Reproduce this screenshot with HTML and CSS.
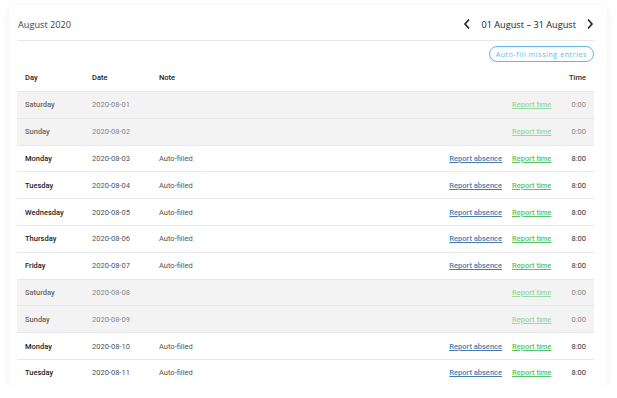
FILE: index.html
```html
<!DOCTYPE html>
<html lang="en">
<head>
  <meta charset="UTF-8" />
  <meta name="viewport" content="width=device-width, initial-scale=1.0"/>
  <title>Timesheet</title>
  <link rel="stylesheet" href="styles.css">
</head>
<body>

<div class="card">
  <div class="card-header">
    <h1 class="title">August 2020</h1>
    <div class="range">
      <button class="range-nav" aria-label="Previous">
        <svg width="8" height="12" viewBox="0 0 8 12"><polyline points="6,1.5 2,6 6,10.5" fill="none" stroke="#222" stroke-width="1.6"/></svg>
      </button>
      <span class="range-label">01 August – 31 August</span>
      <button class="range-nav" aria-label="Next">
        <svg width="8" height="12" viewBox="0 0 8 12"><polyline points="2,1.5 6,6 2,10.5" fill="none" stroke="#222" stroke-width="1.6"/></svg>
      </button>
    </div>
  </div>

  <div class="toolbar">
    <button class="autofill">Auto-fill missing entries</button>
  </div>

  <table class="sheet">
    <colgroup>
      <col class="c-day"><col class="c-date"><col><col class="c-absence"><col class="c-report"><col class="c-time">
    </colgroup>
    <thead>
      <tr>
        <th>Day</th>
        <th>Date</th>
        <th>Note</th>
        <th></th>
        <th></th>
        <th class="num">Time</th>
      </tr>
    </thead>
    <tbody>
      <tr class="weekend"><td class="day">Saturday</td><td class="date">2020-08-01</td><td></td><td></td><td><a href="#" class="report">Report time</a></td><td class="num">0:00</td></tr>
      <tr class="weekend"><td class="day">Sunday</td><td class="date">2020-08-02</td><td></td><td></td><td><a href="#" class="report">Report time</a></td><td class="num">0:00</td></tr>
      <tr><td class="day">Monday</td><td class="date">2020-08-03</td><td class="note">Auto-filled</td><td class="abs"><a href="#" class="absence">Report absence</a></td><td><a href="#" class="report">Report time</a></td><td class="num">8:00</td></tr>
      <tr><td class="day">Tuesday</td><td class="date">2020-08-04</td><td class="note">Auto-filled</td><td class="abs"><a href="#" class="absence">Report absence</a></td><td><a href="#" class="report">Report time</a></td><td class="num">8:00</td></tr>
      <tr><td class="day">Wednesday</td><td class="date">2020-08-05</td><td class="note">Auto-filled</td><td class="abs"><a href="#" class="absence">Report absence</a></td><td><a href="#" class="report">Report time</a></td><td class="num">8:00</td></tr>
      <tr><td class="day">Thursday</td><td class="date">2020-08-06</td><td class="note">Auto-filled</td><td class="abs"><a href="#" class="absence">Report absence</a></td><td><a href="#" class="report">Report time</a></td><td class="num">8:00</td></tr>
      <tr><td class="day">Friday</td><td class="date">2020-08-07</td><td class="note">Auto-filled</td><td class="abs"><a href="#" class="absence">Report absence</a></td><td><a href="#" class="report">Report time</a></td><td class="num">8:00</td></tr>
      <tr class="weekend"><td class="day">Saturday</td><td class="date">2020-08-08</td><td></td><td></td><td><a href="#" class="report">Report time</a></td><td class="num">0:00</td></tr>
      <tr class="weekend"><td class="day">Sunday</td><td class="date">2020-08-09</td><td></td><td></td><td><a href="#" class="report">Report time</a></td><td class="num">0:00</td></tr>
      <tr><td class="day">Monday</td><td class="date">2020-08-10</td><td class="note">Auto-filled</td><td class="abs"><a href="#" class="absence">Report absence</a></td><td><a href="#" class="report">Report time</a></td><td class="num">8:00</td></tr>
      <tr><td class="day">Tuesday</td><td class="date">2020-08-11</td><td class="note">Auto-filled</td><td class="abs"><a href="#" class="absence">Report absence</a></td><td><a href="#" class="report">Report time</a></td><td class="num">8:00</td></tr>
    </tbody>
  </table>
</div>

</body>
</html>
```

FILE: styles.css
```css
/* --- base --- */
:root {
  --line: #e8e8e8;
  --weekend-bg: #f3f3f3;
  --text: #222;
  --blue: #3f7fb3;
  --green: #5cc45c;
  --sky: #62b8dc;
}
* {
  box-sizing: border-box;
  margin: 0;
  padding: 0;
}

body {
  font-family: Roboto, "Open Sans", sans-serif;
  background: #fff;
  color: var(--text);
  padding: 5px 10px 0 9px;
}

.card {
  width: 598px;
  height: 380px;
  background: #fff;
  border-radius: 6px;
  box-shadow: 0 2px 10px rgba(0,0,0,0.07);
  padding: 8px 13px 0 8px;
  overflow: hidden;
}

.card-header {
  display: flex;
  justify-content: space-between;
  align-items: center;
  height: 28px;
  padding: 0 0 5px 1px;
  border-bottom: 1px solid var(--line);
}

.title {
  font-family: "Open Sans", sans-serif;
  font-size: 9.2px;
  font-weight: 400;
  color: #444;
}

.range {
  display: flex;
  align-items: center;
  gap: 10px;
}
.range-label {
  font-family: "Open Sans", sans-serif;
  font-size: 9.2px;
  color: #222;
}
button.range-nav {
  background: transparent;
  border: none;
  display: flex;
  cursor: pointer;
}

.toolbar {
  display: flex;
  justify-content: flex-end;
  padding-top: 5px;
  padding-bottom: 1px;
}
button.autofill {
  height: 16px;
  padding: 0 6px;
  border: 1px solid var(--sky);
  border-radius: 8px;
  background: #fff;
  color: var(--sky);
  font-family: "Open Sans", sans-serif;
  font-size: 7px;
  letter-spacing: 0.6px;
  cursor: pointer;
}

.sheet {
  width: 100%;
  table-layout: fixed;
  border-collapse: collapse;
  font-size: 7.5px;
}
.c-day { width: 67px; }
.c-date { width: 67px; }
.c-absence { width: 80px; }
.c-report { width: 42px; }
.c-time { width: 44px; }

.sheet th,
.sheet td {
  height: 26.8px;
  padding: 0 8px;
  text-align: left;
  border-bottom: 1px solid var(--line);
  white-space: nowrap;
}
.sheet th {
  font-weight: 500;
  height: 28.5px;
}
.sheet td:nth-child(5) { padding: 0 0 0 4px; }
.sheet .num { text-align: right; }
.sheet td.abs { text-align: right; padding-right: 6px; }

.day { font-weight: 500; }
.date, .note { color: #555; }
.num { color: #333; }

a.absence {
  color: var(--blue);
  font-weight: 500;
}
a.report {
  color: var(--green);
  font-weight: 500;
}

.weekend td { background: var(--weekend-bg); }
.weekend .day { color: #666; }
.weekend .date { color: #888; }
.weekend .num { color: #888; }
.weekend a.report { color: #9bd89b; }
```
